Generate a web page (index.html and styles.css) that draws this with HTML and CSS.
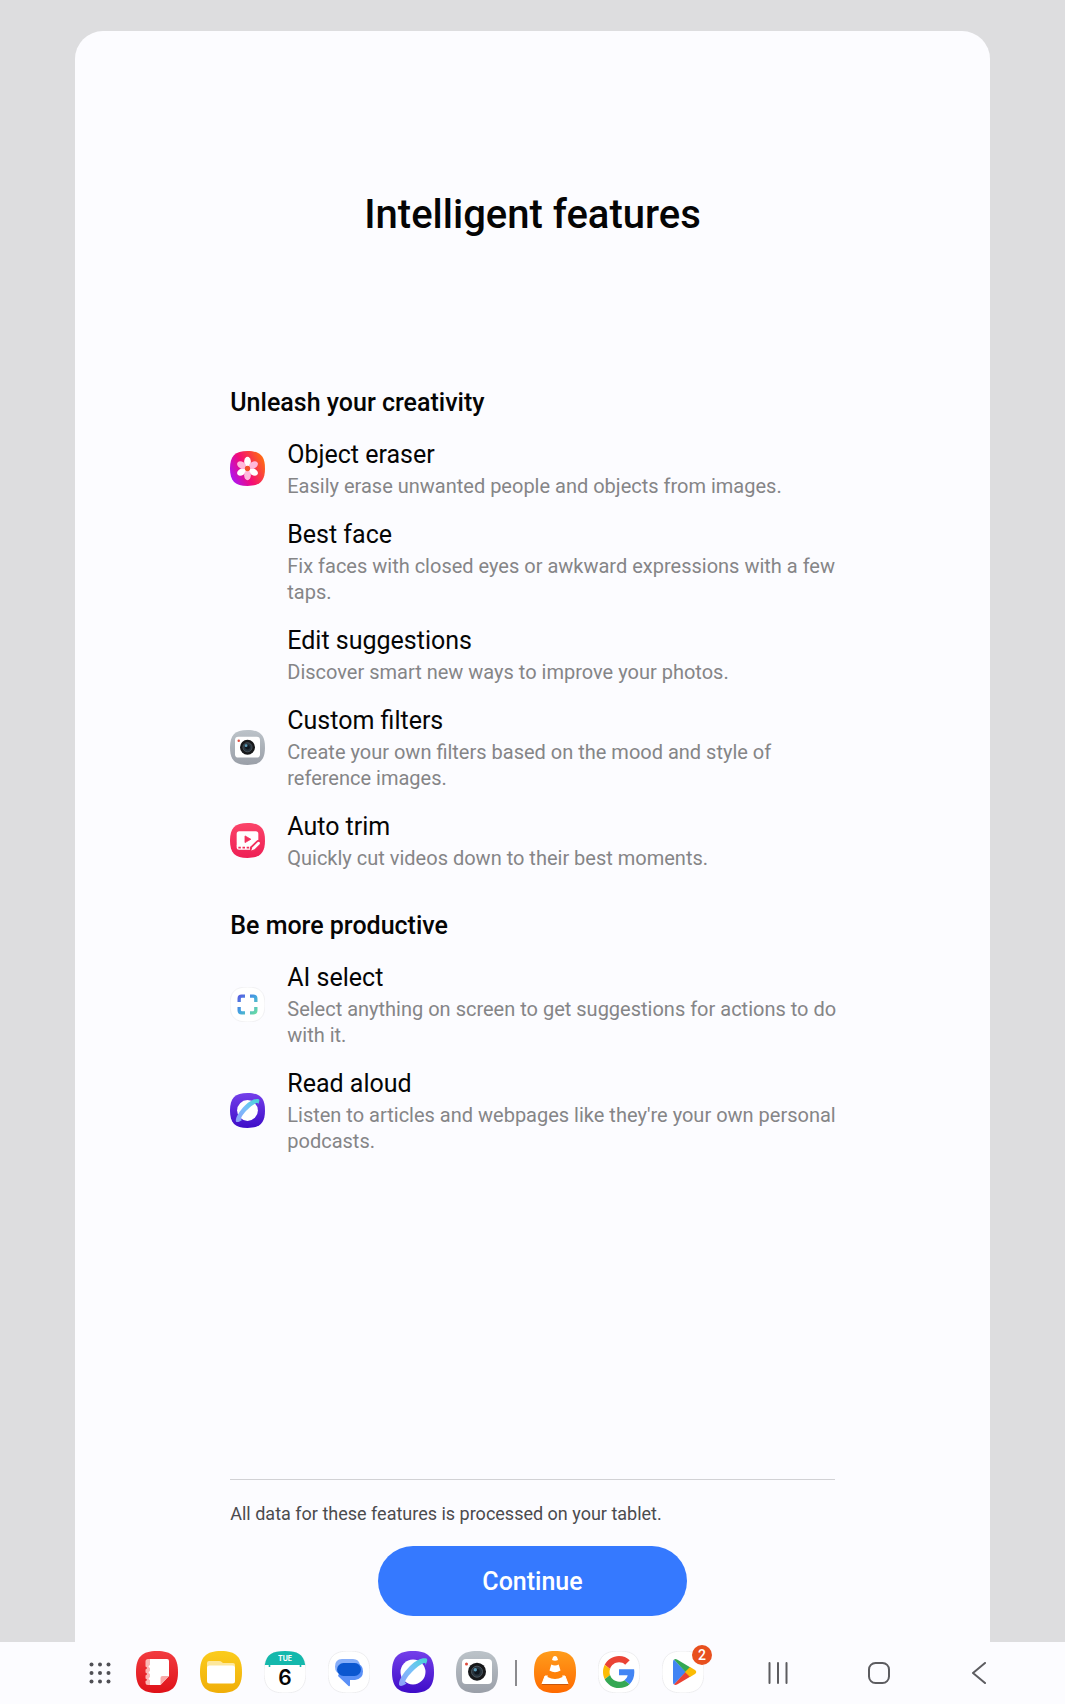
FILE: index.html
```html
<!DOCTYPE html>
<html lang="en">

<head>
    <meta charset="UTF-8">
    <meta name="viewport" content="width=device-width, initial-scale=1.0">
    <title>Intelligent features</title>
    <link rel="stylesheet" href="styles.css">
</head>

<body>

    <!-- shared shapes and gradients -->
    <svg class="defs" width="0" height="0" aria-hidden="true">
        <defs>
            <linearGradient id="gPurple" x1="0" y1="0" x2="0" y2="1">
                <stop offset="0" stop-color="#7440ea" />
                <stop offset="1" stop-color="#3e0cc8" />
            </linearGradient>
            <linearGradient id="gRing" x1="0" y1="1" x2="1" y2="0">
                <stop offset="0" stop-color="#8f9cf8" />
                <stop offset="0.5" stop-color="#78c0fa" />
                <stop offset="1" stop-color="#45d5d5" />
            </linearGradient>
            <linearGradient id="gGray" x1="0" y1="0" x2="0" y2="1">
                <stop offset="0" stop-color="#bcc3c9" />
                <stop offset="1" stop-color="#9a9fa8" />
            </linearGradient>
            <linearGradient id="gRed" x1="0" y1="0" x2="0" y2="1">
                <stop offset="0" stop-color="#f23c40" />
                <stop offset="1" stop-color="#df1118" />
            </linearGradient>
            <linearGradient id="gYellow" x1="0" y1="0" x2="0" y2="1">
                <stop offset="0" stop-color="#fbcc1d" />
                <stop offset="1" stop-color="#f0ae08" />
            </linearGradient>
            <linearGradient id="gOrange" x1="0" y1="0" x2="0" y2="1">
                <stop offset="0" stop-color="#ff9d1c" />
                <stop offset="1" stop-color="#ff6a00" />
            </linearGradient>
            <linearGradient id="gPink" x1="0" y1="0" x2="0" y2="1">
                <stop offset="0" stop-color="#fb4469" />
                <stop offset="1" stop-color="#ee1f55" />
            </linearGradient>
            <linearGradient id="gGallery" x1="0" y1="0.8" x2="1" y2="0.3">
                <stop offset="0" stop-color="#a616ff" />
                <stop offset="0.45" stop-color="#f30b78" />
                <stop offset="1" stop-color="#ff6a13" />
            </linearGradient>
            <linearGradient id="gSelect" gradientUnits="userSpaceOnUse" x1="9" y1="9" x2="33" y2="33">
                <stop offset="0" stop-color="#5a55e0" />
                <stop offset="0.5" stop-color="#43a5e0" />
                <stop offset="1" stop-color="#6fe39a" />
            </linearGradient>
            <symbol id="tile" viewBox="0 0 42 42">
                <path d="M21 0C36 0 42 6 42 21S36 42 21 42 0 36 0 21 6 0 21 0Z" />
            </symbol>
            <symbol id="browser" viewBox="0 0 42 42">
                <use href="#tile" fill="url(#gPurple)" />
                <circle cx="21" cy="21" r="12.5" fill="#fff" />
                <path d="M34.5 7.5C31 6.200 24.500 8.500 18 15C11 22 6.500 30 7 33.500C7.500 36 11 35 14.500 32.500C13.500 32 13 31.500 13.200 30.500C14 27.500 18 22.500 23 18C27.500 14 31.500 11.500 33 12C33.800 12.300 33.600 13.500 33 15C35 11.500 36 8.500 34.500 7.500Z" fill="url(#gRing)" />
            </symbol>
            <symbol id="camera" viewBox="0 0 42 42">
                <use href="#tile" fill="url(#gGray)" />
                <rect x="6" y="8" width="30" height="25" rx="4" fill="#fff" />
                <circle cx="10.500" cy="13" r="1.500" fill="#dd4a3c" />
                <circle cx="21" cy="20.700" r="9" fill="#17181a" />
                <circle cx="21" cy="20.700" r="5.500" fill="#26323b" stroke="#56616a" stroke-width="0.800" />
                <circle cx="21" cy="20.700" r="2.800" fill="#10161e" />
                <circle cx="19.300" cy="18.800" r="1.700" fill="#5b9cb8" />
            </symbol>
        </defs>
    </svg>

    <main class="page">
        <div class="sheet">
            <h1 class="title">Intelligent features</h1>

            <div class="content">
                <section class="group">
                    <h2 class="group-title">Unleash your creativity</h2>
                    <ul class="features">
                        <li class="feature">
                            <svg class="feature-icon" viewBox="0 0 42 42" aria-hidden="true">
                                <use href="#tile" fill="url(#gGallery)" />
                                <g fill="#fff">
                                    <ellipse cx="21" cy="13" rx="4" ry="6" />
                                    <ellipse cx="21" cy="13" rx="4" ry="6" transform="rotate(120 21 21)" />
                                    <ellipse cx="21" cy="13" rx="4" ry="6" transform="rotate(240 21 21)" />
                                </g>
                                <g fill="#ffb9dc">
                                    <ellipse cx="21" cy="13" rx="4" ry="6" transform="rotate(60 21 21)" />
                                    <ellipse cx="21" cy="13" rx="4" ry="6" transform="rotate(180 21 21)" />
                                    <ellipse cx="21" cy="13" rx="4" ry="6" transform="rotate(300 21 21)" />
                                </g>
                                <circle cx="21" cy="21" r="3.200" fill="#f4512c" />
                            </svg>
                            <div class="feature-text">
                                <h3>Object eraser</h3>
                                <p>Easily erase unwanted people and objects from images.</p>
                            </div>
                        </li>
                        <li class="feature">
                            <div class="feature-text">
                                <h3>Best face</h3>
                                <p>Fix faces with closed eyes or awkward expressions with a few taps.</p>
                            </div>
                        </li>
                        <li class="feature">
                            <div class="feature-text">
                                <h3>Edit suggestions</h3>
                                <p>Discover smart new ways to improve your photos.</p>
                            </div>
                        </li>
                        <li class="feature">
                            <svg class="feature-icon" aria-hidden="true"><use href="#camera" /></svg>
                            <div class="feature-text">
                                <h3>Custom filters</h3>
                                <p>Create your own filters based on the mood and style of reference images.</p>
                            </div>
                        </li>
                        <li class="feature">
                            <svg class="feature-icon" viewBox="0 0 42 42" aria-hidden="true">
                                <use href="#tile" fill="url(#gPink)" />
                                <path d="M11 10H31Q34 10 34 13V20L26 28H8V13Q8 10 11 10Z" fill="#fff" />
                                <path d="M8 27H25L24 32H11Q8 32 8 29Z" fill="#fff" />
                                <path d="M10 28.500h3v2h-3zM15 28.500h3v2h-3zM20 28.500h3v2h-3z" fill="#f2305d" />
                                <path d="M18 15.500L25 19.500L18 23.500Z" fill="#f2305d" stroke="#f2305d" stroke-linejoin="round" />
                                <path d="M27.500 30.500L34 24" stroke="#f2305d" stroke-width="7" stroke-linecap="round" />
                                <path d="M25.500 33L27 29L33 23Q34.500 22 35.500 23T35.500 25.500L29.500 31.500Z" fill="#fff" />
                            </svg>
                            <div class="feature-text">
                                <h3>Auto trim</h3>
                                <p>Quickly cut videos down to their best moments.</p>
                            </div>
                        </li>
                    </ul>
                </section>

                <section class="group">
                    <h2 class="group-title">Be more productive</h2>
                    <ul class="features">
                        <li class="feature">
                            <svg class="feature-icon" viewBox="0 0 42 42" aria-hidden="true">
                                <use href="#tile" class="white-tile" />
                                <path d="M11 18V14Q11 11 14 11H18M24 11H28Q31 11 31 14V18M31 24V28Q31 31 28 31H24M18 31H14Q11 31 11 28V24" fill="none" stroke="url(#gSelect)" stroke-width="4" />
                            </svg>
                            <div class="feature-text">
                                <h3>AI select</h3>
                                <p>Select anything on screen to get suggestions for actions to do with it.</p>
                            </div>
                        </li>
                        <li class="feature">
                            <svg class="feature-icon" aria-hidden="true"><use href="#browser" /></svg>
                            <div class="feature-text">
                                <h3>Read aloud</h3>
                                <p>Listen to articles and webpages like they're your own personal podcasts.</p>
                            </div>
                        </li>
                    </ul>
                </section>

                <div class="bottom">
                    <p class="note">All data for these features is processed on your tablet.</p>
                    <button class="continue" type="button">Continue</button>
                </div>
            </div>
        </div>
    </main>

    <nav class="taskbar" aria-label="Taskbar">
        <button class="key all-apps" type="button" aria-label="Apps">
            <svg viewBox="0 0 22 22" fill="#505055">
                <circle cx="2.500" cy="2.500" r="2" /><circle cx="11" cy="2.500" r="2" /><circle cx="19.500" cy="2.500" r="2" />
                <circle cx="2.500" cy="11" r="2" /><circle cx="11" cy="11" r="2" /><circle cx="19.500" cy="11" r="2" />
                <circle cx="2.500" cy="19.500" r="2" /><circle cx="11" cy="19.500" r="2" /><circle cx="19.500" cy="19.500" r="2" />
            </svg>
        </button>
        <div class="apps">
            <button class="app" type="button" aria-label="Notes">
                <svg viewBox="0 0 42 42">
                    <use href="#tile" fill="url(#gRed)" />
                    <path d="M12 8H15V34H12Q9.500 34 9.500 31.500V30Q12.500 29 9.500 27.500V24.500Q12.500 23 9.500 21.500V18.500Q12.500 17 9.500 15.500V10.500Q9.500 8 12 8Z" fill="#fcb9b6" />
                    <path d="M14 8H31Q33 8 33 10V25L24.500 34H14V29Q11 28 14 26V23Q11 21.500 14 20V17Q11 15.500 14 14Z" fill="#fff" />
                    <path d="M33 25H26.500Q24.500 25 24.500 27V34Z" fill="#f9a9a7" />
                </svg>
            </button>
            <button class="app" type="button" aria-label="Files">
                <svg viewBox="0 0 42 42">
                    <use href="#tile" fill="url(#gYellow)" />
                    <path d="M9 10H19Q21 10 22 11.200L23 12H33Q35 12 35 14V20H7V12Q7 10 9 10Z" fill="#fde79c" />
                    <rect x="7" y="14.500" width="28" height="18" rx="2.500" fill="#fff" />
                </svg>
            </button>
            <button class="app" type="button" aria-label="Calendar">
                <svg viewBox="0 0 42 42">
                    <use href="#tile" class="white-tile" />
                    <path d="M0.800 14C2.500 3 8.500 0 21 0S39.500 3 41.200 14Z" fill="#14b8ac" />
                    <path d="M5.500 13V16M36.500 13V16" stroke="#14b8ac" stroke-width="1.600" />
                    <text class="cal-day" x="21" y="10">TUE</text>
                    <text class="cal-date" x="21" y="34">6</text>
                </svg>
            </button>
            <button class="app" type="button" aria-label="Messages">
                <svg viewBox="0 0 42 42">
                    <use href="#tile" class="white-tile" />
                    <path d="M14 8H25Q31 8 32 14L25 23H14Q7 23 7 15.500T14 8Z" fill="#86aef9" />
                    <path d="M15 12H28Q35 13 35 20.500T27 29H22V34Q22 36 20.500 35L10 25Z" fill="#5a90f7" />
                    <rect x="9" y="12" width="24" height="13" rx="6.500" fill="#0b57d0" />
                </svg>
            </button>
            <button class="app" type="button" aria-label="Internet">
                <svg><use href="#browser" /></svg>
            </button>
            <button class="app" type="button" aria-label="Camera">
                <svg><use href="#camera" /></svg>
            </button>
        </div>
        <span class="separator"></span>
        <div class="apps">
            <button class="app" type="button" aria-label="VLC">
                <svg viewBox="0 0 42 42">
                    <use href="#tile" fill="url(#gOrange)" />
                    <path d="M8 33L11 25H31L34 33Z" fill="#fff" stroke="#fff" stroke-linejoin="round" />
                    <path d="M13.500 26L14.500 21H27.500L28.500 26Q21 30 13.500 26Z" fill="#ff8108" />
                    <path d="M17.300 13.500Q21 15.500 24.700 13.500L26.500 19.500Q21 23 15.500 19.500Z" fill="#fff" />
                    <path d="M19 6Q21 4 23 6L24 9Q21 10.500 18 9Z" fill="#fff" />
                    <path d="M8 33.500H34" stroke="#c9560b" />
                </svg>
            </button>
            <button class="app" type="button" aria-label="Google">
                <svg viewBox="0 0 42 42">
                    <use href="#tile" class="white-tile" />
                    <g transform="translate(5 5) scale(0.667)">
                        <path fill="#ea4335" d="M24 9.500c3.540 0 6.710 1.220 9.210 3.600l6.850-6.850C35.900 2.380 30.470 0 24 0 14.620 0 6.510 5.380 2.560 13.220l7.980 6.190C12.430 13.720 17.740 9.500 24 9.500z" />
                        <path fill="#4285f4" d="M46.980 24.550c0-1.570-.150-3.090-.380-4.550H24v9.020h12.940c-.580 2.960-2.260 5.480-4.780 7.180l7.730 6c4.510-4.180 7.090-10.360 7.090-17.650z" />
                        <path fill="#fbbc05" d="M10.530 28.590c-.480-1.450-.760-2.990-.760-4.590s.270-3.140.760-4.590l-7.980-6.190C.920 16.460 0 20.120 0 24c0 3.880.920 7.540 2.560 10.780l7.970-6.190z" />
                        <path fill="#34a853" d="M24 48c6.480 0 11.930-2.130 15.890-5.810l-7.730-6c-2.150 1.450-4.920 2.300-8.160 2.300-6.260 0-11.570-4.220-13.470-9.910l-7.980 6.190C6.510 42.620 14.620 48 24 48z" />
                    </g>
                </svg>
            </button>
            <button class="app" type="button" aria-label="Play Store, 2 updates">
                <svg viewBox="0 0 42 42">
                    <use href="#tile" class="white-tile" />
                    <path d="M12 8.500L24 21L12 33.500Q11 33 11 31V11Q11 9 12 8.500Z" fill="#4285f4" />
                    <path d="M12 8.500Q13.500 7.500 15.500 8.800L28.500 16.500L23.500 21Z" fill="#34a853" />
                    <path d="M12 33.500Q13.500 34.500 15.500 33.200L28.500 25.500L23.500 21Z" fill="#ea4335" />
                    <path d="M28 16L33 19Q35.500 21 33 23L28 26L23 21Z" fill="#fbbc04" />
                </svg>
                <span class="badge">2</span>
            </button>
        </div>
        <div class="keys">
            <button class="key" type="button" aria-label="Recents">
                <svg viewBox="0 0 22 22"><path d="M2.500 1V21M11 1V21M19.500 1V21" /></svg>
            </button>
            <button class="key" type="button" aria-label="Home">
                <svg viewBox="0 0 22 22"><rect x="1" y="1" width="20" height="20" rx="6.500" /></svg>
            </button>
            <button class="key" type="button" aria-label="Back">
                <svg viewBox="0 0 22 22"><path d="M17 1L5 11L17 21" /></svg>
            </button>
        </div>
    </nav>

</body>

</html>
```
FILE: styles.css
```css
* {
    box-sizing: border-box;
}

body {
    font-family: Roboto, "Liberation Sans", sans-serif;
    background-color: #dddddf;
    color: #050505;
    margin: 0;
    min-height: 100vh;
    display: flex;
    flex-direction: column;
}

h1,
h2,
h3,
p,
ul {
    margin: 0;
    padding: 0;
}

button {
    border: none;
    background: none;
    padding: 0;
    font-family: inherit;
    cursor: pointer;
}

svg {
    display: block;
}

.defs {
    position: absolute;
}

.page {
    flex: 1;
    display: flex;
    justify-content: center;
    padding-top: 31px;
}

.sheet {
    width: 86%;
    display: flex;
    flex-direction: column;
    align-items: center;
    padding: 157px 0 26px;
    background-color: #fcfcff;
    border-radius: 28px 28px 0 0;
}

.title {
    font-size: 40px;
    line-height: 54px;
    font-weight: 500;
    text-align: center;
}

.content {
    flex: 1;
    width: 66%;
    display: flex;
    flex-direction: column;
    padding-top: 144px;
}

.group {
    margin-bottom: 38px;
}

.group-title {
    font-size: 25px;
    line-height: 34px;
    font-weight: 500;
    margin-bottom: 18px;
}

.features {
    list-style: none;
    display: flex;
    flex-direction: column;
    gap: 19px;
}

.feature {
    display: grid;
    grid-template-columns: 35px 1fr;
    column-gap: 22px;
    align-items: center;
    /* descriptions may run a little past the divider */
    margin-right: -16px;
}

.feature-icon {
    width: 35px;
    height: 35px;
    overflow: visible;
}

.feature-text {
    grid-column: 2;
}

.feature-text h3 {
    font-size: 25px;
    line-height: 34px;
    font-weight: 400;
}

.feature-text p {
    margin-top: 1px;
    font-size: 20px;
    line-height: 26px;
    color: #858587;
}

.white-tile {
    fill: #fff;
    stroke: #eeeef0;
}

.bottom {
    margin-top: auto;
    display: flex;
    flex-direction: column;
    align-items: center;
    border-top: 1px solid #d2d2d5;
}

.note {
    width: 100%;
    padding: 22px 0 20px;
    font-size: 18px;
    line-height: 24px;
    color: #4b4b4e;
}

.continue {
    width: 51%;
    height: 70px;
    border-radius: 35px;
    background-color: #3579ff;
    color: #fff;
    font-size: 25px;
    font-weight: 500;
}

/* bottom bar */
.taskbar {
    display: flex;
    align-items: center;
    height: 62px;
    padding: 0 75px 0 89px;
    background-color: #fcfcff;
}

.all-apps {
    margin-right: 25px;
}

.apps {
    display: flex;
    align-items: center;
    gap: 22px;
    margin-bottom: 2px;
}

.app {
    position: relative;
    width: 42px;
    height: 42px;
}

.app svg {
    width: 42px;
    height: 42px;
    overflow: visible;
}

.key svg {
    width: 22px;
    height: 22px;
}

.cal-day,
.cal-date {
    font-family: Inter, sans-serif;
    text-anchor: middle;
}

.cal-day {
    font-size: 7px;
    font-weight: 700;
    fill: #fff;
}

.cal-date {
    font-size: 21px;
    font-weight: 600;
    fill: #050505;
}

.separator {
    width: 2px;
    height: 26px;
    margin: 0 17px;
    background-color: #8b8b8f;
}

.badge {
    position: absolute;
    top: -6px;
    right: -8px;
    width: 20px;
    height: 20px;
    border-radius: 50%;
    background-color: #e8501e;
    color: #fff;
    font-size: 14px;
    line-height: 20px;
    font-weight: 500;
    text-align: center;
}

.keys {
    flex: 1;
    display: flex;
    justify-content: space-between;
    margin-left: 63px;
}

.keys svg {
    fill: none;
    stroke: #5c5c60;
    stroke-width: 2;
    stroke-linecap: round;
    stroke-linejoin: round;
}
```
